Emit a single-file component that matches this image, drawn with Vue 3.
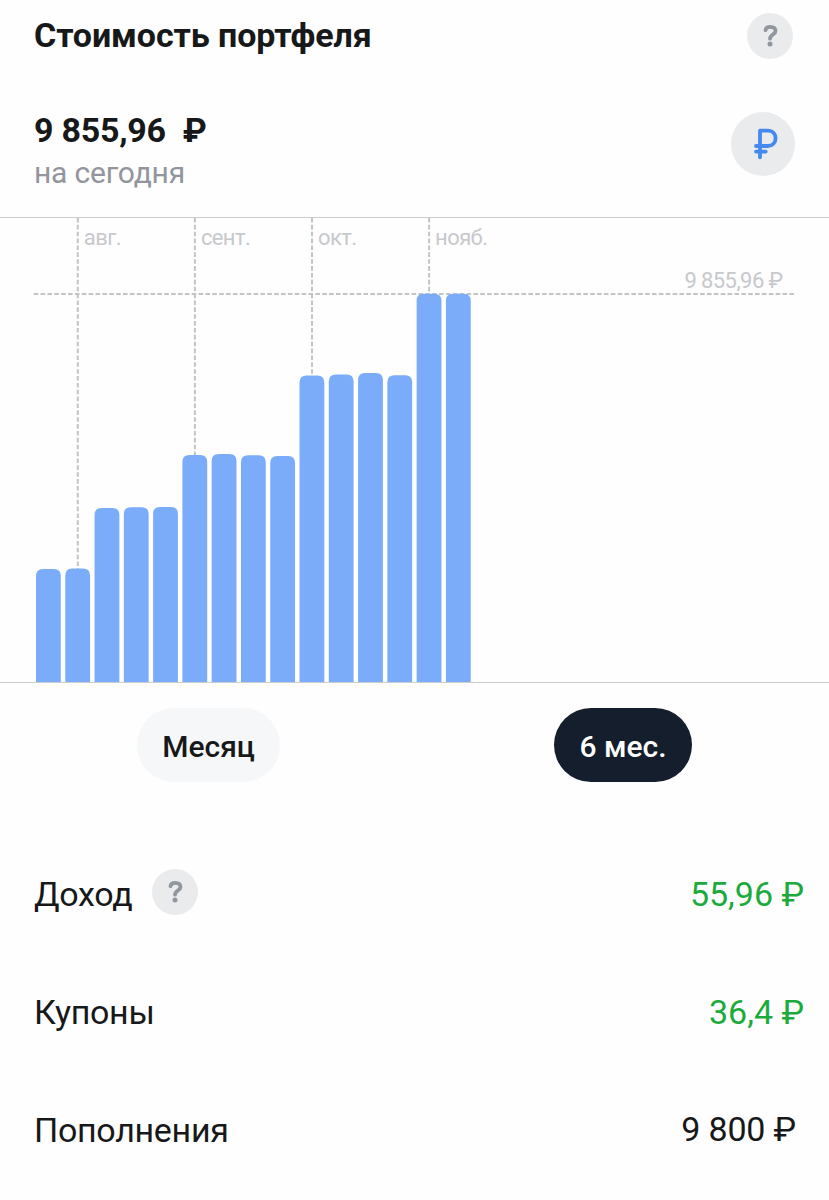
<script setup>
const BASE = 682 - 217
const tops = [569, 568.5, 508, 507.3, 507, 455, 454, 455.3, 456, 375.6, 374.6, 373, 375.2, 293.7, 293.7]
const bars = tops.map((top, i) => {
  const x = 36 + i * 29.28
  const y = top - 217
  const r = 7
  return `M${x} ${BASE}V${y + r}q0 ${-r} ${r} ${-r}h${24.8 - 2 * r}q${r} 0 ${r} ${r}V${BASE}z`
})
const months = [
  { x: 77.8, label: 'авг.', end: 352 },
  { x: 194.9, label: 'сент.', end: 238 },
  { x: 312, label: 'окт.', end: 159 },
  { x: 429.1, label: 'нояб.', end: 77 },
]
const rows = [
  { label: 'Доход', value: '55,96', help: true, gain: true },
  { label: 'Купоны', value: '36,4', gain: true },
  { label: 'Пополнения', value: '9 800' },
]
</script>

<template>
  <main class="page">
    <header class="header">
      <h1 class="title">Стоимость портфеля</h1>
      <span class="help">
        <svg viewBox="0 0 46 46"><path d="M18.5 17.2C18.8 14.8 20.6 13.9 23.2 13.9C26.4 13.9 28.5 15.4 28.5 18C28.5 21.6 23 21.4 23 25.7" /><circle cx="23" cy="31" r="2.5" /></svg>
      </span>
    </header>

    <section class="summary">
      <div>
        <div class="total"><span>9 855,96</span><span class="sign">₽</span></div>
        <div class="date">на сегодня</div>
      </div>
      <span class="currency">
        <svg viewBox="0 0 64 64"><path d="M29 45.3V18.6H36.7C47.2 18.6 47.2 34 36.7 34H25M25 39.6H34.7" /></svg>
      </span>
    </section>

    <svg class="chart" viewBox="0 0 829 466">
      <path class="rule" d="M0 .5H829M0 465.5H829" />
      <g v-for="m in months" :key="m.label">
        <path class="dash" :d="`M${m.x} 1V${m.end}`" />
        <text class="label" :x="m.x + 6" y="28">{{ m.label }}</text>
      </g>
      <path class="dash" d="M33.7 77H795" />
      <text class="label" x="782.5" y="71" text-anchor="end">9 855,96 ₽</text>
      <path v-for="(d, i) in bars" :key="i" class="bar" :d="d" />
    </svg>

    <nav class="periods">
      <button class="pill month">Месяц</button>
      <button class="pill active">6 мес.</button>
    </nav>

    <section class="rows">
      <div v-for="row in rows" :key="row.label" class="row">
        <span class="name">{{ row.label }}</span>
        <span v-if="row.help" class="help">
          <svg viewBox="0 0 46 46"><path d="M18.5 17.2C18.8 14.8 20.6 13.9 23.2 13.9C26.4 13.9 28.5 15.4 28.5 18C28.5 21.6 23 21.4 23 25.7" /><circle cx="23" cy="31" r="2.5" /></svg>
        </span>
        <span class="value" :class="{ gain: row.gain }">{{ row.value }} ₽</span>
      </div>
    </section>
  </main>
</template>

<style>
body { background: #fefefe; }
</style>

<style scoped>
.page { width: 829px; height: 1200px; overflow: hidden; background: #fefefe; color: #171819; font-family: Roboto, "Noto Sans", sans-serif; }
.header { display: flex; align-items: center; justify-content: space-between; height: 72px; padding: 0 36px 0 34px; }
.title { margin: 0; padding-bottom: 2px; font-size: 34px; line-height: 40px; font-weight: 700; letter-spacing: -0.1px; }
.help { width: 46px; height: 46px; border-radius: 50%; background: #e9ebed; flex: none; }
.help svg { display: block; width: 46px; height: 46px; }
.help path { fill: none; stroke: #92979f; stroke-width: 3.8; stroke-linecap: round; }
.help circle { fill: #92979f; }
.summary { display: flex; justify-content: space-between; height: 145px; box-sizing: border-box; padding: 38px 34px 0; }
.total { display: flex; gap: 17px; font-size: 34px; line-height: 40px; font-weight: 700; letter-spacing: -0.25px; }
.date { margin-top: 5px; color: #92959c; font-size: 30px; line-height: 36px; letter-spacing: -0.2px; }
.currency { width: 64px; height: 64px; margin-top: 2px; border-radius: 50%; background: #e9ebed; }
.currency svg { display: block; width: 64px; height: 64px; }
.currency path { fill: none; stroke: #448aee; stroke-width: 3.8; stroke-linecap: round; stroke-linejoin: round; }
.chart { display: block; width: 829px; height: 466px; }
.rule { stroke: #cbcccd; stroke-width: 1; }
.dash { fill: none; stroke: #c3c4c5; stroke-width: 2; stroke-dasharray: 4.6 2.27; }
.label { fill: #c7c9cc; font-size: 22px; letter-spacing: -0.6px; }
.bar { fill: #7aacf9; }
.periods { display: flex; gap: 274px; padding: 25px 0 0 137px; }
.pill { height: 74px; border: 0; border-radius: 37px; padding: 3px 0 0; font: 500 30px Roboto, sans-serif; width: 143px; background: #f5f7f9; color: #171819; }
.active { width: 138px; background: #141e2c; color: #fefefe; }
.rows { padding: 51px 25px 0 34px; }
.row { display: flex; align-items: center; height: 118px; font-size: 34px; }
.row .help { margin-left: 20px; }
.name { padding-top: 3px; letter-spacing: -0.3px; }
.value { margin-left: auto; padding-top: 3px; }
.row:last-child .value { padding: 2px 8px 0 0; letter-spacing: -0.15px; }
.gain { color: #1aab3c; }
</style>
